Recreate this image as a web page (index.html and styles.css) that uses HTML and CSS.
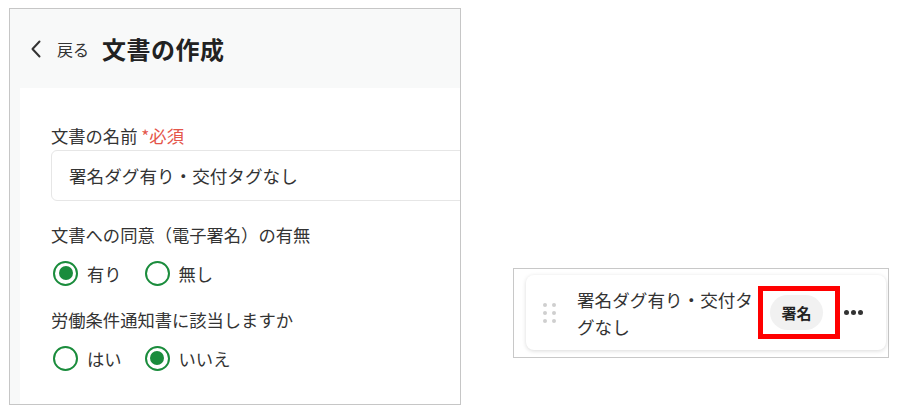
FILE: index.html
```html
<!DOCTYPE html>
<html lang="ja">
<head>
    <meta charset="UTF-8">
    <title>文書の作成</title>
    <link rel="stylesheet" href="styles.css">
</head>
<body>
    <div class="page">
        <!-- 文書作成フォーム -->
        <div class="panel">
            <div class="panel-head">
                <span class="back">
                    <svg width="12" height="18" viewBox="0 0 12 18">
                        <path d="M9.5 1.5 L2.5 9 L9.5 16.5" fill="none" stroke="#333" stroke-width="2" stroke-linecap="round" stroke-linejoin="round"/>
                    </svg>
                    <span class="back-text">戻る</span>
                </span>
                <h1 class="title">文書の作成</h1>
            </div>
            <div class="panel-body">
                <div class="label">文書の名前 <span class="req">*必須</span></div>
                <div class="text-box">署名ダグ有り・交付タグなし</div>

                <div class="label label-gap">文書への同意（電子署名）の有無</div>
                <div class="radios">
                    <span class="radio checked"></span><span class="radio-text">有り</span>
                    <span class="radio"></span><span class="radio-text">無し</span>
                </div>

                <div class="label label-gap">労働条件通知書に該当しますか</div>
                <div class="radios">
                    <span class="radio"></span><span class="radio-text">はい</span>
                    <span class="radio checked"></span><span class="radio-text">いいえ</span>
                </div>
            </div>
        </div>

        <!-- 一覧のカード -->
        <div class="list-frame">
            <div class="doc-card">
                <div class="grip">
                    <i></i><i></i><i></i><i></i><i></i><i></i>
                </div>
                <div class="doc-name">署名ダグ有り・交付タグなし</div>
                <div class="mark">
                    <span class="badge">署名</span>
                </div>
                <div class="more"><i></i><i></i><i></i></div>
            </div>
        </div>
    </div>
</body>
</html>
```

FILE: styles.css
```css
*{
    box-sizing: border-box;
}
body{
    margin: 0;
    background-color: #fff;
    font-family: "Noto Sans CJK JP", "Noto Sans", sans-serif;
    color: #333;
}
.page{
    display: flex;
    align-items: flex-start;
    padding: 8px 0 0 9px;
    gap: 52px;
}
.panel{
    width: 452px;
    height: 397px;
    border: 1px solid #c6c6c6;
    background-color: #f8f9f9;
    display: flex;
    flex-direction: column;
    overflow: hidden;
}
.panel-head{
    height: 79px;
    flex: none;
    display: flex;
    align-items: center;
    padding: 0 0 0 20px;
}
.back{
    display: flex;
    align-items: center;
}
.back svg{
    display: block;
}
.back-text{
    font-size: 16px;
    margin-left: 15px;
    color: #333;
}
.title{
    margin: 0 0 0 13px;
    font-size: 24px;
    font-weight: bold;
    color: #222;
    letter-spacing: 0.5px;
}
.panel-body{
    flex: 1;
    margin-left: 10px;
    background-color: #fff;
    padding: 36px 0 0 31px;
}
.label{
    font-size: 17.3px;
    line-height: 24px;
    color: #333;
}
.req{
    color: #e4554a;
}
.label-gap{
    margin-top: 22px;
}
.text-box{
    margin-top: 2px;
    width: 480px;
    height: 51px;
    border: 1px solid #e6e6e6;
    border-radius: 6px;
    padding-left: 17px;
    display: flex;
    align-items: center;
    font-size: 17.6px;
    color: #333;
}
.radios{
    display: flex;
    align-items: center;
    margin-top: 13px;
    height: 26px;
}
.radio{
    flex: none;
    width: 25px;
    height: 25px;
    border: 2.5px solid #1a8c3c;
    border-radius: 50%;
    margin-left: 2px;
    display: flex;
    align-items: center;
    justify-content: center;
}
.radio.checked::after{
    content: "";
    width: 14px;
    height: 14px;
    border-radius: 50%;
    background-color: #1a8c3c;
}
.radio-text{
    font-size: 17.3px;
    margin-left: 9px;
    margin-right: 21px;
}
.list-frame{
    margin-top: 260px;
    width: 376px;
    height: 90px;
    border: 1px solid #c8c8c8;
    padding: 6px 2px 7px 12px;
}
.doc-card{
    height: 100%;
    border-radius: 8px;
    background-color: #fff;
    box-shadow: 0 1px 4px rgba(0,0,0,0.15);
    display: flex;
    align-items: center;
    padding-left: 17px;
}
.grip{
    display: grid;
    grid-template-columns: 4px 4px;
    gap: 4px 5px;
}
.grip i{
    width: 4px;
    height: 4px;
    border-radius: 50%;
    background-color: #cfcfcf;
}
.doc-name{
    width: 180px;
    margin-left: 21px;
    font-size: 17.6px;
    line-height: 27px;
    color: #333;
}
.mark{
    position: relative;
    margin-left: 1px;
    padding: 9px 17px 9px 12px;
}
.mark::before{
    content: "";
    position: absolute;
    left: 0;
    top: 0;
    right: 0;
    bottom: 0;
    border: 5px solid #f00;
}
.badge{
    display: block;
    width: 53px;
    height: 35px;
    line-height: 35px;
    text-align: center;
    border-radius: 18px;
    background-color: #f1f1f1;
    font-size: 15px;
    font-weight: bold;
    color: #222;
}
.more{
    display: flex;
    gap: 2px;
    margin-left: 4px;
}
.more i{
    width: 5px;
    height: 5px;
    border-radius: 50%;
    background-color: #333;
}
```
